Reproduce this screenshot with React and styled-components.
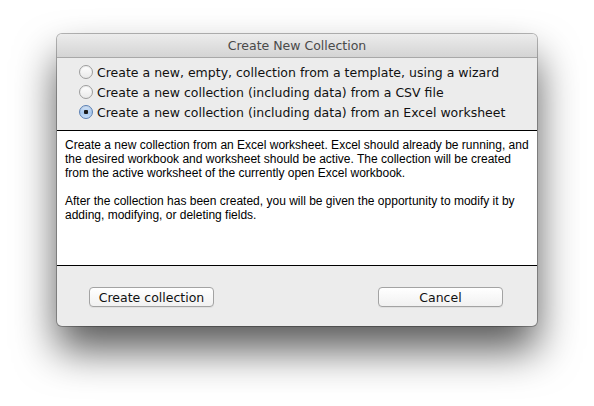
import React, { useState } from "react"
import styled, { createGlobalStyle } from "styled-components"

const GlobalStyle = createGlobalStyle`
    html, body {
        margin: 0;
        padding: 0;
        background: #ffffff;
    }
`

const Page = styled.div`
    width: 594px;
    height: 406px;
    padding: 34px 0 0 57px;
    box-sizing: border-box;
`

const Window = styled.div`
    width: 480px;
    height: 292px;
    display: flex;
    flex-direction: column;
    background: #ececec;
    border-radius: 5px;
    box-shadow: 0 0 0 1px rgba(0, 0, 0, 0.28), 0 24px 42px rgba(0, 0, 0, 0.65);
    overflow: hidden;
    font-family: "DejaVu Sans", "Liberation Sans", sans-serif;
`

const TitleBar = styled.div`
    height: 23px;
    flex: none;
    display: flex;
    align-items: center;
    justify-content: center;
    background: linear-gradient(#ececec, #d4d4d4);
    border-bottom: 1px solid #a8a8a8;
    font-size: 12.5px;
    color: #4a4a4a;
`

const Options = styled.div`
    padding: 4px 0 8px 22px;
    display: flex;
    flex-direction: column;
`

const OptionRow = styled.label`
    height: 20px;
    display: flex;
    align-items: center;
    gap: 4px;
    font-size: 12.5px;
    color: #111;
    cursor: default;
`

const Radio = styled.span`
    width: 14px;
    height: 14px;
    box-sizing: border-box;
    border-radius: 50%;
    border: 1px solid ${p => (p.$checked ? "#5a7fb3" : "#9d9d9d")};
    background: ${p =>
        p.$checked
            ? "radial-gradient(circle at 50% 50%, #1a1a1a 0 2px, transparent 2.5px), linear-gradient(#d6e6f8, #a8c8ee 55%, #c6dcf6)"
            : "linear-gradient(#ffffff, #e9e9e9)"};
    box-shadow: inset 0 1px 1px rgba(0, 0, 0, 0.08);
`

const Description = styled.div`
    height: 136px;
    flex: none;
    box-sizing: border-box;
    background: #ffffff;
    border-top: 1px solid #000;
    border-bottom: 1px solid #000;
    padding: 7px 8px;
    font-family: "Liberation Sans", Arial, sans-serif;
    font-size: 12px;
    line-height: 14px;
    color: #000;

    p {
        margin: 0 0 14px 0;
    }
`

const Footer = styled.div`
    flex: 1;
    display: flex;
    justify-content: space-between;
    align-items: flex-start;
    padding: 21px 34px 0 32px;
`

const Button = styled.button`
    width: 125px;
    height: 20px;
    border: 1px solid #a3a3a3;
    border-radius: 4px;
    background: linear-gradient(#ffffff, #f1f1f1);
    box-shadow: 0 1px 0 rgba(0, 0, 0, 0.05);
    font-family: "DejaVu Sans", "Liberation Sans", sans-serif;
    font-size: 12.5px;
    color: #111;
    padding: 0;
`

const options = [
    "Create a new, empty, collection from a template, using a wizard",
    "Create a new collection (including data) from a CSV file",
    "Create a new collection (including data) from an Excel worksheet",
]

const App = () => {
    const [selected, setSelected] = useState(2)

    return (
        <>
            <GlobalStyle />
            <Page>
                <Window>
                    <TitleBar>Create New Collection</TitleBar>
                    <Options>
                        {options.map((text, index) => (
                            <OptionRow key={index} onClick={() => setSelected(index)}>
                                <Radio $checked={selected == index} />
                                {text}
                            </OptionRow>
                        ))}
                    </Options>
                    <Description>
                        <p>
                            Create a new collection from an Excel worksheet. Excel should already be running, and
                            the desired workbook and worksheet should be active. The collection will be created
                            from the active worksheet of the currently open Excel workbook.
                        </p>
                        <p>
                            After the collection has been created, you will be given the opportunity to modify it by
                            adding, modifying, or deleting fields.
                        </p>
                    </Description>
                    <Footer>
                        <Button>Create collection</Button>
                        <Button>Cancel</Button>
                    </Footer>
                </Window>
            </Page>
        </>
    )
}

export default App
